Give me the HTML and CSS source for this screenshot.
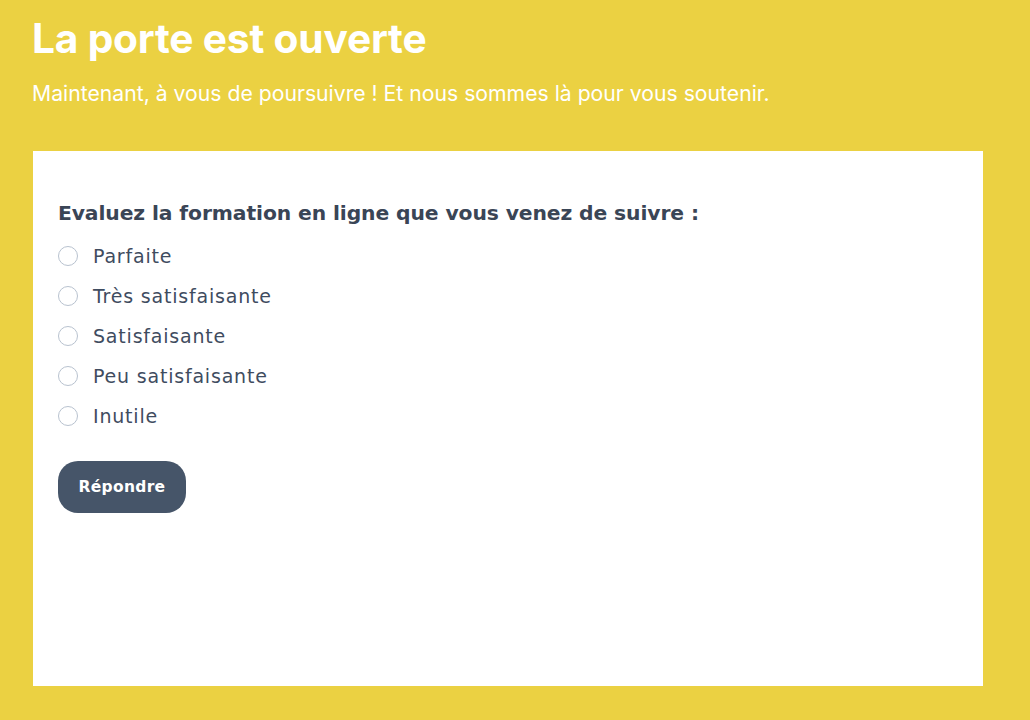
FILE: index.html
```html
<!DOCTYPE html>
<html lang="fr">
<head>
<meta charset="utf-8">
<link rel="stylesheet" href="styles.css">
</head>
<body>
<header class="hero">
  <h1 class="hero-title">La porte est ouverte</h1>
  <p class="hero-sub">Maintenant, à vous de poursuivre ! Et nous sommes là pour vous soutenir.</p>
</header>
<main class="card">
  <form class="survey">
    <h2 class="question">Evaluez la formation en ligne que vous venez de suivre :</h2>
    <ul class="options">
      <li class="option"><span class="radio"></span><span class="label">Parfaite</span></li>
      <li class="option"><span class="radio"></span><span class="label">Très satisfaisante</span></li>
      <li class="option"><span class="radio"></span><span class="label">Satisfaisante</span></li>
      <li class="option"><span class="radio"></span><span class="label">Peu satisfaisante</span></li>
      <li class="option"><span class="radio"></span><span class="label">Inutile</span></li>
    </ul>
    <button type="button" class="submit">Répondre</button>
  </form>
</main>
</body>
</html>
```
FILE: styles.css
```css
* { box-sizing: border-box; }
html, body { margin: 0; padding: 0; }
body {
  background: #ebd142;
  width: 1030px;
  height: 720px;
  overflow: hidden;
  padding: 0 47px 0 33px;
  font-family: "Inter", "Liberation Sans", sans-serif;
}
.hero { padding-top: 14px; }
.hero-title {
  margin: 0 0 0 -1px;
  font-size: 40.7px;
  line-height: 50px;
  font-weight: 700;
  color: #ffffff;
  letter-spacing: -0.2px;
}
.hero-sub {
  margin: 15px 0 0 -1px;
  font-family: "Inter", sans-serif;
  font-size: 21.2px;
  line-height: 28px;
  color: #ffffff;
  font-weight: 400;
}
.card {
  margin-top: 44px;
  background: #ffffff;
  height: 535px;
  width: 950px;
  padding: 46px 25px 0;
}
.survey { margin: 0; }
.question {
  margin: 0;
  font-family: "DejaVu Sans", "Liberation Sans", sans-serif;
  font-weight: 700;
  font-size: 20.3px;
  line-height: 32px;
  color: #3a4556;
  letter-spacing: -0.1px;
}
.options {
  list-style: none;
  margin: 7px 0 0;
  padding: 0;
  display: flex;
  flex-direction: column;
}
.option {
  display: flex;
  align-items: center;
  height: 40px;
  gap: 15px;
}
.radio {
  width: 20px;
  height: 20px;
  border: 1px solid #b8c2cf;
  border-radius: 50%;
  flex: none;
}
.label {
  font-family: "DejaVu Sans", "Liberation Sans", sans-serif;
  font-size: 19px;
  font-weight: 400;
  color: #3f4c5f;
  letter-spacing: 0.8px;
}
.submit {
  margin-top: 25px;
  width: 128px;
  height: 52px;
  border: none;
  border-radius: 20px;
  background: #465569;
  color: #ffffff;
  font-family: "DejaVu Sans", "Liberation Sans", sans-serif;
  font-size: 15.5px;
  font-weight: 700;
  letter-spacing: 0.3px;
  padding: 0;
  cursor: pointer;
}
```
